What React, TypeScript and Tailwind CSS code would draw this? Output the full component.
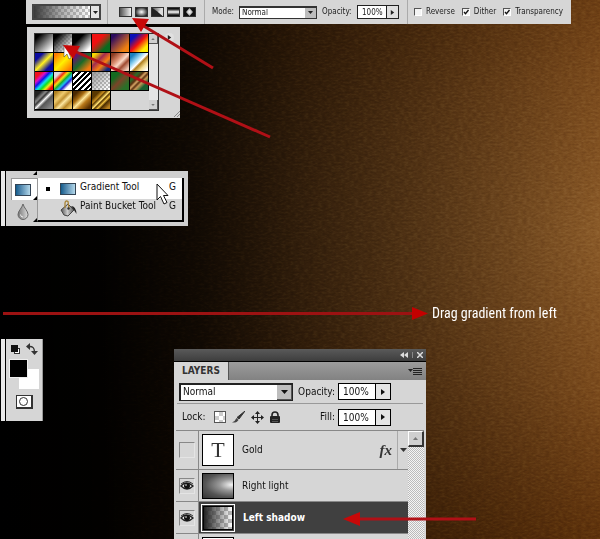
import { useState, type ReactNode } from "react";

const presets: { name: string; fill: string }[] = [
  { name: "Foreground to Background", fill: "bg-[linear-gradient(135deg,#000_15%,#777_50%,#fff_90%)]" },
  { name: "Foreground to Transparent", fill: "bg-[linear-gradient(135deg,#000_15%,#555c_45%,#fff6_85%),repeating-conic-gradient(#bbb_0_25%,#fff_0_50%)] bg-[length:100%_100%,4px_4px]" },
  { name: "Black, White", fill: "bg-[linear-gradient(135deg,#000_30%,#777_55%,#fff_85%)]" },
  { name: "Red, Green", fill: "bg-[linear-gradient(135deg,#f01010_35%,#8a3c18_55%,#0a6a1e_75%)]" },
  { name: "Violet, Orange", fill: "bg-[linear-gradient(135deg,#2a0a5e_15%,#8a4040_45%,#f08010_80%)]" },
  { name: "Blue, Red, Yellow", fill: "bg-[linear-gradient(135deg,#0a10b8_20%,#f01010_50%,#ffee00_80%)]" },
  { name: "Blue, Yellow, Blue", fill: "bg-[linear-gradient(135deg,#0a0aa0_22%,#fff020_50%,#0a0aa0_78%)]" },
  { name: "Orange, Yellow, Orange", fill: "bg-[linear-gradient(135deg,#ff7a00_10%,#fff000_50%,#ff7a00_90%)]" },
  { name: "Violet, Green, Orange", fill: "bg-[linear-gradient(135deg,#6a1070_15%,#1c6a28_50%,#f07a10_85%)]" },
  { name: "Yellow, Violet, Orange, Blue", fill: "bg-[linear-gradient(135deg,#f8d800_12%,#a02a50_38%,#f88010_62%,#102a80_88%)]" },
  { name: "Copper", fill: "bg-[linear-gradient(135deg,#8a3a20_10%,#d88a6c_35%,#fbd8c5_52%,#a04a30_68%,#f0c8b4_90%)]" },
  { name: "Chrome", fill: "bg-[linear-gradient(135deg,#1a80c0_15%,#8cd0f0_35%,#fff_50%,#b08020_58%,#f4dc90_75%,#fff_95%)]" },
  { name: "Spectrum", fill: "bg-[linear-gradient(135deg,#f01020_18%,#e010c0_30%,#1010f0_42%,#10e0f0_54%,#10e020_65%,#f0f010_76%,#f01010_88%)]" },
  { name: "Transparent Rainbow", fill: "bg-[linear-gradient(135deg,#ddd_18%,#f03010_30%,#f8e010_40%,#18b030_50%,#20c0f0_60%,#2020d0_68%,#fff_80%)]" },
  { name: "Transparent Stripes", fill: "bg-[repeating-linear-gradient(135deg,#000_0_2px,#fff_2px_4px)]" },
  { name: "Neutral Density", fill: "bg-[linear-gradient(135deg,#888c_10%,#8886_50%,#8880_90%),repeating-conic-gradient(#bbb_0_25%,#fff_0_50%)] bg-[length:100%_100%,4px_4px]" },
  { name: "Green, Brown", fill: "bg-[linear-gradient(135deg,#146a20_25%,#7a4428_50%,#2a7028_80%)]" },
  { name: "Brown, Green", fill: "bg-[linear-gradient(135deg,#5a3010_10%,#2c6a28_25%,#5a3010_38%,#d8a868_46%,#5a3010_54%,#c89858_62%,#1c6030_78%)]" },
  { name: "Silver", fill: "bg-[linear-gradient(135deg,#222_18%,#888_32%,#333_40%,#f4f4f4_50%,#555_60%,#888_90%)]" },
  { name: "Gold", fill: "bg-[linear-gradient(135deg,#b08020_10%,#f0cc70_32%,#c09030_46%,#fbe6a0_58%,#b88828_75%,#e8c060_90%)]" },
  { name: "Dark Gold", fill: "bg-[linear-gradient(135deg,#4a2800_15%,#a86c10_35%,#ffe89a_50%,#b87818_65%,#5a3000_90%)]" },
  { name: "Gold Bars", fill: "bg-[linear-gradient(135deg,#5a3800_22%,#c89020_35%,#5a3800_40%,#ffe070_50%,#5a3800_56%,#f0c040_64%,#4a2c00_72%,#b88020_90%)]" },
];

function Wedge({ className }: { className: string }) {
  return (
    <svg viewBox="0 0 6 6" className={className} aria-hidden="true">
      <path d="M1 0L5 3L1 6Z" fill="currentColor" />
    </svg>
  );
}

function Caret({ className }: { className: string }) {
  return (
    <svg viewBox="0 0 7 4" className={className} aria-hidden="true">
      <path d="M0 0H7L3.5 4Z" fill="currentColor" />
    </svg>
  );
}

function Tick({ label, initial }: { label: string; initial: boolean }) {
  const [on, setOn] = useState(initial);
  return (
    <label className="flex items-center gap-1">
      <span className="grid">
        <input
          type="checkbox"
          checked={on}
          onChange={() => setOn(!on)}
          className="col-start-1 row-start-1 size-2 appearance-none border border-white border-t-[#555] border-l-[#555] bg-[#f4f4f4]"
        />
        {on && (
          <svg viewBox="0 0 8 8" className="pointer-events-none col-start-1 row-start-1 size-2" aria-hidden="true">
            <path d="M2 4L3.5 5.7L6.5 2" fill="none" stroke="#111" strokeWidth="1.3" />
          </svg>
        )}
      </span>
      {label}
    </label>
  );
}

function Divider() {
  return <span className="h-6 w-px shrink-0 bg-[#aaa]" />;
}

function StyleButton({ label, children }: { label: string; children: ReactNode }) {
  return (
    <button type="button" aria-label={label} className="block h-[10px] w-[13px]">
      <svg viewBox="0 0 13 10" className="block h-[10px] w-[13px]" aria-hidden="true">
        {children}
        <rect x=".5" y=".5" width="12" height="9" fill="none" stroke="#333" />
      </svg>
    </button>
  );
}

function OptionsBar() {
  return (
    <header className="mr-[29px] ml-[26px] flex h-6 items-center bg-[#d6d6d6] pl-1.5 text-[8px] text-[#222]">
      <button type="button" aria-label="Edit gradient" className="flex h-4 w-[69px] shrink-0 border-2 border-[#444]">
        <span className="h-full grow bg-[linear-gradient(90deg,#3a3a3a,#6668_50%,#fff0),repeating-conic-gradient(#c4c4c4_0_25%,#fff_0_50%)] bg-[length:100%_100%,6px_6px]" />
        <span className="flex h-full w-[9px] items-center justify-center border-l border-[#333] bg-[#e4e4e4]">
          <Caret className="h-[3px] w-[5px]" />
        </span>
      </button>
      <span className="w-1.5 shrink-0" />
      <Divider />
      <div className="flex shrink-0 gap-[3px] pr-2 pl-[11px]">
        <StyleButton label="Linear gradient">
          <rect width="13" height="10" fill="url(#lin)" />
        </StyleButton>
        <StyleButton label="Radial gradient">
          <rect width="13" height="10" fill="url(#rad)" />
        </StyleButton>
        <StyleButton label="Angle gradient">
          <rect width="13" height="10" fill="url(#lin)" />
          <path d="M0 0L7 5L13 10H0Z" fill="#222" />
          <path d="M7 5L13 0V10Z" fill="#ddd" />
        </StyleButton>
        <StyleButton label="Reflected gradient">
          <rect width="13" height="10" fill="url(#refl)" />
        </StyleButton>
        <StyleButton label="Diamond gradient">
          <rect width="13" height="10" fill="#111" />
          <path d="M6.5 1L10 5L6.500 9L3 5Z" fill="url(#rad2)" />
        </StyleButton>
      </div>
      <Divider />
      <label htmlFor="mode" className="ml-[7px] w-[27px] shrink-0">Mode:</label>
      <span className="grid w-[78px] shrink-0">
        <select id="mode" className="col-start-1 row-start-1 h-[13px] appearance-none border border-t-2 border-[#333] bg-white pl-0.5">
          <option>Normal</option>
        </select>
        <span className="pointer-events-none col-start-1 row-start-1 m-px mt-0.5 flex w-[11px] items-center justify-center justify-self-end bg-[#bdbdbd]">
          <Caret className="h-[3px] w-[5px]" />
        </span>
      </span>
      <label htmlFor="opacity" className="ml-[5px] w-[35px] shrink-0">Opacity:</label>
      <span className="flex h-[14px] w-[42px] shrink-0 border border-[#222] bg-white">
        <input id="opacity" defaultValue="100%" className="w-7 pl-1 outline-none" />
        <button type="button" aria-label="Opacity slider" className="flex grow items-center justify-center border-l border-[#222] bg-[#e0e0e0]">
          <Wedge className="size-[5px]" />
        </button>
      </span>
      <span className="w-2 shrink-0" />
      <Divider />
      <div className="flex grow justify-between pr-2 pl-1.5">
        <Tick label="Reverse" initial={false} />
        <Tick label="Dither" initial={true} />
        <Tick label="Transparency" initial={true} />
      </div>
    </header>
  );
}

function PresetPicker() {
  return (
    <section aria-label="Gradient presets" className="mt-[3px] ml-[27px] flex w-[153px] bg-[#d6d6d6] pt-1.5 pb-[7px] pl-[7px]">
      <div className="flex shrink-0 border border-[#333]">
        <div className="grid grid-cols-[repeat(6,19px)] content-start">
          {presets.map((p) => (
            <button key={p.name} type="button" aria-label={p.name} className="size-[19px] border-r border-b border-black">
              <span className={"block size-full " + p.fill} />
            </button>
          ))}
        </div>
        <div className="flex w-[9px] flex-col justify-between bg-[#e4e4e4]">
          <span className="flex h-[10px] items-center justify-center border-r border-b border-[#555] bg-[#d0d0d0]">
            <Caret className="h-[2px] w-1 rotate-180 text-[#777]" />
          </span>
          <span className="flex h-[10px] items-center justify-center border-r border-b border-[#555] bg-[#d0d0d0]">
            <Caret className="h-[2px] w-1 text-[#777]" />
          </span>
        </div>
      </div>
      <button type="button" aria-label="Preset menu" className="ml-1.5 flex size-[9px] shrink-0 items-center justify-center rounded-full bg-[#e0e0e0]">
        <Wedge className="size-[5px] text-[#222]" />
      </button>
      <svg viewBox="0 0 6 6" className="-mb-1.5 size-1.5 shrink-0 self-end" aria-hidden="true">
        <path d="M0 6L6 0M3 6L6 3" stroke="#888" />
      </svg>
    </section>
  );
}

function GradientIcon() {
  return <span className="block h-3 w-4 border border-[#345] bg-linear-to-r from-[#0f5c8c] to-[#b4d8ea]" />;
}

function Rail() {
  return (
    <>
      <span className="w-1 bg-[#e8e8e8]" />
      <span className="w-px bg-black" />
    </>
  );
}

function Corner() {
  return (
    <svg viewBox="0 0 4 4" className="size-1 self-end" aria-hidden="true">
      <path d="M4 0V4H0Z" />
    </svg>
  );
}

function ToolFlyout() {
  return (
    <nav aria-label="Tools" className="mt-[53px] ml-px flex h-[55px] w-[187px] bg-[#cfcfcf] text-[10px] text-[#111]">
      <Rail />
      <div className="ml-[5px] flex w-[26px] flex-col">
        <span className="flex h-[7px] flex-col">
          <Corner />
        </span>
        <button type="button" aria-label="Gradient Tool" className="flex h-[22px] items-center justify-end gap-0.5 border-t border-l border-[#999] bg-white">
          <GradientIcon />
          <Corner />
        </button>
        <button type="button" aria-label="Blur Tool" className="flex h-[22px] items-center justify-end gap-1">
          <svg viewBox="0 0 12 17" className="h-[17px] w-3" aria-hidden="true">
            <path d="M6 1C7 5 11 8 11 11.500A5 5 0 0 1 1 11.500C1 8 5 5 6 1Z" fill="url(#drop)" stroke="#666" />
            <path d="M3.500 11.500A2.500 2.500 0 0 0 6 14" fill="none" stroke="#eee" />
          </svg>
          <Corner />
        </button>
      </div>
      <ul className="mt-[7px] mr-1 mb-1 flex grow flex-col border-r-2 border-b-2 border-l border-black border-l-[#999] bg-[#d6d6d6]">
        <li className="flex h-[21px] bg-white">
          <button type="button" className="flex grow items-center pr-1.5 pl-2">
            <span className="mr-2.5 size-1 bg-black" />
            <GradientIcon />
            <span className="ml-1 grow pb-1 text-left whitespace-nowrap">Gradient Tool</span>
            <span className="pb-1">G</span>
          </button>
        </li>
        <li className="flex h-[18px]">
          <button type="button" className="flex grow items-center pr-1.5 pl-[21px]">
            <svg viewBox="0 0 18 17" className="h-[17px] w-[18px]" aria-hidden="true">
              <path d="M2 10L9 4L15 10L9 16L5 15Z" fill="url(#metal)" stroke="#444" />
              <path d="M6 8V3Q6.500 0 9 1.500L10 9" fill="none" stroke="#a88438" strokeWidth="1.300" />
              <path d="M12 6Q17 6 17.500 14L15 10Z" fill="#222" />
              <circle cx="9.500" cy="8.500" r="1.200" fill="#333" />
            </svg>
            <span className="ml-[3px] grow pb-1 text-left whitespace-nowrap">Paint Bucket Tool</span>
            <span className="pb-1">G</span>
          </button>
        </li>
      </ul>
    </nav>
  );
}

function DragHint() {
  return (
    <p className="mt-[77px] ml-[3px] flex h-5 items-center gap-1 font-['Liberation_Sans_Narrow','Roboto_Condensed','Liberation_Sans',sans-serif] text-[14px] text-white">
      <svg viewBox="0 0 425 14" className="h-3.5 w-[425px] shrink-0" aria-hidden="true">
        <path d="M0 7.500H412" stroke="#9c1212" strokeWidth="3" />
        <path d="M409 1L425 7.500L409 14Z" fill="#c40000" />
      </svg>
      <span className="whitespace-nowrap">Drag gradient from left</span>
    </p>
  );
}

function ColorWell() {
  return (
    <section aria-label="Colors" className="flex h-[82px] w-[42px] shrink-0 bg-[#d6d6d6]">
      <Rail />
      <div className="flex grow flex-col items-center border-r border-[#999] pt-1">
        <div className="flex w-full justify-between pr-1 pl-1">
          <button type="button" aria-label="Default colors">
            <svg viewBox="0 0 11 11" className="size-[11px]" aria-hidden="true">
              <rect x="4.500" y="4.500" width="5" height="5" fill="#fff" stroke="#333" />
              <rect width="7" height="7" x="1" y="1" fill="#111" />
            </svg>
          </button>
          <button type="button" aria-label="Swap colors">
            <svg viewBox="0 0 12 12" className="size-3" aria-hidden="true">
              <path d="M3 3.500Q8.500 3 8.500 9" fill="none" stroke="#333" strokeWidth="1.400" />
              <path d="M4 0V7L0 3.500ZM5 8H12L8.500 12Z" fill="#333" />
            </svg>
          </button>
        </div>
        <div className="mt-1 grid h-[30px] w-[30px]">
          <button type="button" aria-label="Background color" className="col-start-1 row-start-1 size-5 self-end justify-self-end bg-white" />
          <button type="button" aria-label="Foreground color" className="col-start-1 row-start-1 size-[19px] border border-[#eee] bg-black" />
        </div>
        <button type="button" aria-label="Quick mask" className="mt-[6px] flex h-[14px] w-[17px] items-center justify-center border border-r-2 border-b-2 border-[#333] bg-white">
          <span className="size-[9px] rounded-full border border-[#333]" />
        </button>
      </div>
    </section>
  );
}

function PercentField({ id, label }: { id: string; label: string }) {
  return (
    <span className="flex items-center gap-[3px]">
      <label htmlFor={id}>{label}</label>
      <span className="flex h-[17px] w-[53px] border border-black bg-white">
        <input id={id} defaultValue="100%" className="w-9 pl-1 outline-none" />
        <button type="button" aria-label={label + " slider"} className="flex grow items-center justify-center border-l border-black bg-[#e4e4e4]">
          <Wedge className="size-1.5" />
        </button>
      </span>
    </span>
  );
}

function Eye() {
  return (
    <svg viewBox="0 0 14 12" className="h-3 w-3.5" aria-hidden="true">
      <path d="M1 6Q6 0 13 6Q7 12 1 6Z" fill="#eee" stroke="#222" strokeWidth="1.300" />
      <path d="M1 4Q7 -1 13 4" fill="none" stroke="#333" />
      <circle cx="7" cy="6" r="3" fill="#111" />
      <circle cx="6" cy="5" r=".8" fill="#fff" />
    </svg>
  );
}

function LayerRow({ visible, selected, name, thumb, tall, effects }: {
  visible: boolean;
  selected?: boolean;
  name: string;
  thumb: ReactNode;
  tall?: boolean;
  effects?: boolean;
}) {
  return (
    <li className={"flex border-b border-[#888] " + (tall ? "h-[39px]" : "h-8")}>
      <div className="flex w-[23px] shrink-0 items-center justify-center border-r border-[#888]">
        <button
          type="button"
          aria-label={"Visibility of " + (name || "layer")}
          className="flex size-4 items-center justify-center border border-[#e4e4e4] border-t-[#888] border-l-[#888]"
        >
          {visible && <Eye />}
        </button>
      </div>
      <div className={"flex grow items-center " + (selected ? "bg-[#404040] font-bold text-white" : "")}>
        {thumb}
        <span className="ml-2 grow whitespace-nowrap">{name}</span>
        {effects && (
          <>
            <span className="mr-[5px] font-['Liberation_Serif',serif] text-[15px] font-bold text-[#333] italic">fx</span>
            <span className="flex w-[11px] items-center justify-center self-stretch border-l border-[#aaa]">
              <Caret className="h-1 w-[7px] text-[#333]" />
            </span>
          </>
        )}
      </div>
    </li>
  );
}

function LayersPanel() {
  return (
    <section aria-label="Layers" className="mt-[10px] ml-[131px] flex h-[300px] w-[252px] shrink-0 flex-col bg-[#d6d6d6] text-[10px] text-[#111]">
      <div className="flex h-[13px] items-center justify-end gap-1 border-b border-black bg-linear-to-b from-[#5a5a5a] to-[#3e3e3e] pr-[3px] text-[#ddd]">
        <button type="button" aria-label="Collapse">
          <svg viewBox="0 0 8 6" className="h-1.5 w-2" aria-hidden="true">
            <path d="M4 0V6L0 3ZM8 0V6L4 3Z" fill="currentColor" />
          </svg>
        </button>
        <span className="h-1.5 w-px bg-[#888]" />
        <button type="button" aria-label="Close">
          <svg viewBox="0 0 6 6" className="size-1.5" aria-hidden="true">
            <path d="M0 0L6 6M6 0L0 6" stroke="currentColor" strokeWidth="1.500" />
          </svg>
        </button>
      </div>
      <div className="flex h-[18px] items-stretch justify-between bg-linear-to-b from-[#9c9c9c] to-[#828282]">
        <h2 className="flex w-[55px] items-center justify-center border-r border-[#555] bg-[#d6d6d6] font-bold text-[#333]">LAYERS</h2>
        <button type="button" aria-label="Panel menu" className="mr-1">
          <svg viewBox="0 0 14 9" className="h-[9px] w-3.5" aria-hidden="true">
            <path d="M0 2H5L2.500 5Z" fill="#222" />
            <path d="M5 1.500H14M5 3.500H14M5 5.500H14M5 7.500H14" stroke="#222" />
          </svg>
        </button>
      </div>
      <div className="mx-[3px] flex h-6 shrink-0 items-center justify-between border-b border-[#999] pr-8 pl-0.5">
        <span className="grid w-[114px]">
          <select aria-label="Blend mode" className="col-start-1 row-start-1 h-[18px] appearance-none border border-t-2 border-l-2 border-[#222] bg-white pl-0.5">
            <option>Normal</option>
          </select>
          <span className="pointer-events-none col-start-1 row-start-1 m-px mt-0.5 flex w-[15px] items-center justify-center justify-self-end border-r border-b border-[#555] bg-[#bdbdbd]">
            <Caret className="h-1 w-[7px]" />
          </span>
        </span>
        <PercentField id="layer-opacity" label="Opacity:" />
      </div>
      <div className="mx-[3px] flex h-[26px] shrink-0 items-center pr-8 pl-[5px]">
        <span>Lock:</span>
        <div className="ml-2 flex grow items-center gap-1.5">
          <button type="button" aria-label="Lock transparent pixels" className="size-3 border border-[#555] bg-[repeating-conic-gradient(#ccc_0_25%,#fff_0_50%)] bg-[length:8px_8px]" />
          <button type="button" aria-label="Lock image pixels">
            <svg viewBox="0 0 13 12" className="h-3 w-[13px]" aria-hidden="true">
              <path d="M13 0L7 8L5 6.500Z" fill="#333" stroke="#333" />
              <path d="M4.500 7L6.500 9Q5 12 0 11.500Q3 10.500 4.500 7Z" fill="#444" />
            </svg>
          </button>
          <button type="button" aria-label="Lock position">
            <svg viewBox="0 0 13 13" className="size-[13px]" aria-hidden="true">
              <path d="M6.500 1V12M1 6.500H12" stroke="#222" />
              <path d="M6.500 0L9 3H4ZM6.500 13L9 10H4ZM0 6.500L3 4V9ZM13 6.500L10 4V9Z" fill="#222" />
            </svg>
          </button>
          <button type="button" aria-label="Lock all">
            <svg viewBox="0 0 10 12" className="h-3 w-2.5" aria-hidden="true">
              <path d="M2 6V4Q2 1 5 1T8 4V6" fill="none" stroke="#222" strokeWidth="1.600" />
              <rect y="5" width="10" height="7" rx="1" fill="#222" />
              <path d="M2 8.500H8M2 10.500H8" stroke="#777" strokeWidth=".6" />
            </svg>
          </button>
        </div>
        <PercentField id="layer-fill" label="Fill:" />
      </div>
      <div className="mx-0.5 flex grow border-t border-[#888]">
        <ul className="grow">
          <LayerRow
            visible={false}
            name="Gold"
            tall
            effects
            thumb={
              <span className="ml-[3px] flex size-8 shrink-0 items-center justify-center border border-black bg-white font-['Liberation_Serif',serif] text-[22px] leading-none text-[#333]">T</span>
            }
          />
          <LayerRow
            visible
            name="Right light"
            thumb={
              <span className="ml-[3px] h-[26px] w-8 shrink-0 border border-black bg-[radial-gradient(ellipse_at_95%_45%,#f4f4f4,#999_30%,#555_65%,#333)]" />
            }
          />
          <LayerRow
            visible
            selected
            name="Left shadow"
            thumb={
              <span className="ml-0.5 flex h-7 w-[34px] shrink-0 border border-white p-px">
                <span className="grow border border-black bg-[linear-gradient(90deg,#222,#444a_45%,#0000),repeating-conic-gradient(#bbb_0_25%,#fff_0_50%)] bg-[length:100%_100%,8px_8px]" />
              </span>
            }
          />
          <LayerRow
            visible={false}
            name=""
            tall
            thumb={<span className="ml-[3px] size-8 shrink-0 border border-black bg-white" />}
          />
        </ul>
        <div className="w-4 shrink-0 bg-[repeating-conic-gradient(#bbb_0_25%,#f4f4f4_0_50%)] bg-[length:2px_2px]">
          <button type="button" aria-label="Scroll up" className="flex h-4 w-full items-center justify-center border border-r-2 border-b-2 border-white border-r-[#333] border-b-[#333] bg-[#cfcfcf]">
            <Caret className="h-[3px] w-[5px] rotate-180 text-[#777]" />
          </button>
        </div>
      </div>
    </section>
  );
}

function Pointers() {
  return (
    <svg viewBox="0 0 600 539" className="pointer-events-none absolute top-0 left-0 h-[539px] w-[600px]" aria-hidden="true">
      <path d="M64 45V57L67 54L69 59L71 58L69 53H73Z" fill="#fff" stroke="#333" strokeWidth=".5" />
      <path d="M157 184V200L160.500 196.500L164 204L167 202.500L163.500 195.500H168Z" fill="#fff" stroke="#111" />
      <g stroke="#b01016" strokeWidth="3">
        <path d="M142 25L213 68" />
        <path d="M74 51L270 137" />
        <path d="M356 519H476" />
      </g>
      <path d="M132 18L149 19L141 32ZM63 45L80 46L73 59ZM343 519L360 512V526Z" fill="#c80808" />
    </svg>
  );
}

function Leather() {
  return (
    <svg className="pointer-events-none absolute inset-0 size-full opacity-15 mix-blend-soft-light" aria-hidden="true">
      <defs>
        <filter id="grain" x="0" y="0" width="100%" height="100%" colorInterpolationFilters="sRGB">
          <feTurbulence type="fractalNoise" baseFrequency=".22 .5" numOctaves="2" seed="4" />
          <feColorMatrix values="1.800 0 0 0 -.4  1.800 0 0 0 -.4  1.800 0 0 0 -.4  0 0 0 0 1" />
        </filter>
        <linearGradient id="lin">
          <stop stopColor="#444" />
          <stop offset="1" stopColor="#fff" />
        </linearGradient>
        <radialGradient id="rad">
          <stop stopColor="#fff" />
          <stop offset="1" stopColor="#222" />
        </radialGradient>
        <radialGradient id="rad2">
          <stop stopColor="#fff" />
          <stop offset="1" stopColor="#999" />
        </radialGradient>
        <linearGradient id="refl" x2="0" y2="1">
          <stop offset=".2" stopColor="#111" />
          <stop offset=".5" stopColor="#fff" />
          <stop offset=".8" stopColor="#111" />
        </linearGradient>
        <linearGradient id="drop">
          <stop stopColor="#777" />
          <stop offset="1" stopColor="#ddd" />
        </linearGradient>
        <linearGradient id="metal">
          <stop stopColor="#555" />
          <stop offset=".5" stopColor="#ccc" />
          <stop offset="1" stopColor="#555" />
        </linearGradient>
      </defs>
      <rect width="100%" height="100%" filter="url(#grain)" />
    </svg>
  );
}

export default function App() {
  return (
    <main className="relative isolate h-screen overflow-hidden bg-[linear-gradient(90deg,#000,#000000fa_17%,#000000d8_33%,#00000098_50%,#00000064_67%,#00000034_83%,#0000),radial-gradient(ellipse_110%_65%_at_100%_43%,#8a5a28,#7a4a1c_45%,#552a06)] font-['DejaVu_Sans_Condensed','DejaVu_Sans',sans-serif] leading-none">
      <Leather />
      <div className="relative flex flex-col items-stretch">
        <OptionsBar />
        <PresetPicker />
        <ToolFlyout />
        <DragHint />
        <div className="mt-4 ml-px flex items-start">
          <ColorWell />
          <LayersPanel />
        </div>
      </div>
      <Pointers />
    </main>
  );
}
